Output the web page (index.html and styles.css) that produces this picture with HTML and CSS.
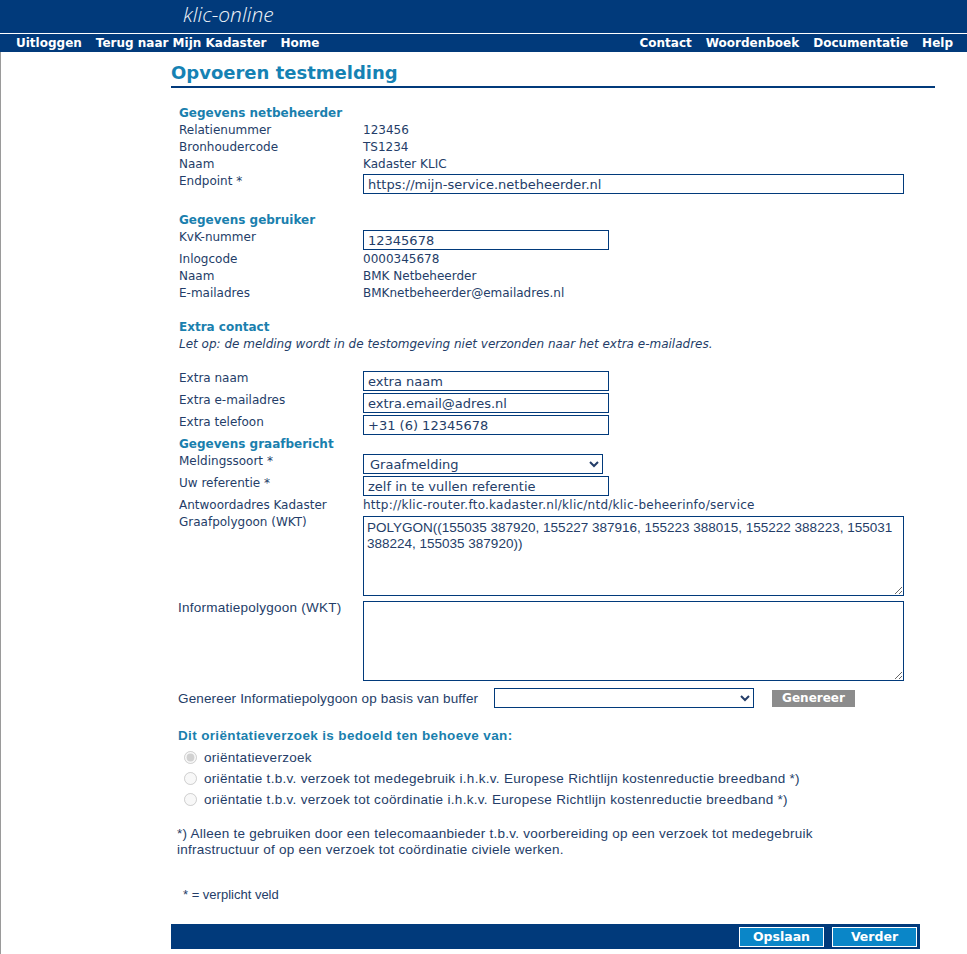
FILE: index.html
```html
<!DOCTYPE html>
<html lang="nl">
<head>
<meta charset="utf-8">
<title>Opvoeren testmelding - klic-online</title>
<link rel="stylesheet" href="styles.css">
</head>
<body>
<header class="top">
  <div class="brand">klic-online</div>
</header>
<nav class="nav">
  <div class="nav-group">
    <a href="#">Uitloggen</a>
    <a href="#">Terug naar Mijn Kadaster</a>
    <a href="#">Home</a>
  </div>
  <div class="nav-group">
    <a href="#">Contact</a>
    <a href="#">Woordenboek</a>
    <a href="#">Documentatie</a>
    <a href="#">Help</a>
  </div>
</nav>
<div class="page">
  <main class="main">
    <h1 class="title">Opvoeren testmelding</h1>
    <form class="form">
      <div class="row head">Gegevens netbeheerder</div>
      <div class="row"><span class="lbl">Relatienummer</span><span class="val">123456</span></div>
      <div class="row"><span class="lbl">Bronhoudercode</span><span class="val">TS1234</span></div>
      <div class="row"><span class="lbl">Naam</span><span class="val">Kadaster KLIC</span></div>
      <div class="row irow"><span class="lbl">Endpoint *</span><input class="inp wide" type="text" value="https://mijn-service.netbeheerder.nl"></div>
      <div class="row blank"></div>

      <div class="row head">Gegevens gebruiker</div>
      <div class="row irow"><span class="lbl">KvK-nummer</span><input class="inp" type="text" value="12345678"></div>
      <div class="row"><span class="lbl">Inlogcode</span><span class="val">0000345678</span></div>
      <div class="row"><span class="lbl">Naam</span><span class="val">BMK Netbeheerder</span></div>
      <div class="row"><span class="lbl">E-mailadres</span><span class="val">BMKnetbeheerder@emailadres.nl</span></div>
      <div class="row blank"></div>

      <div class="row head">Extra contact</div>
      <div class="row note">Let op: de melding wordt in de testomgeving niet verzonden naar het extra e-mailadres.</div>
      <div class="row blank"></div>
      <div class="row irow"><span class="lbl">Extra naam</span><input class="inp" type="text" value="extra naam"></div>
      <div class="row irow"><span class="lbl">Extra e-mailadres</span><input class="inp" type="text" value="extra.email@adres.nl"></div>
      <div class="row irow"><span class="lbl">Extra telefoon</span><input class="inp" type="text" value="+31 (6) 12345678"></div>

      <div class="row head">Gegevens graafbericht</div>
      <div class="row irow"><span class="lbl">Meldingssoort *</span>
        <select class="sel"><option>Graafmelding</option><option>Calamiteitenmelding</option><option>Oriëntatieverzoek</option></select>
      </div>
      <div class="row irow"><span class="lbl">Uw referentie *</span><input class="inp" type="text" value="zelf in te vullen referentie"></div>
      <div class="row"><span class="lbl">Antwoordadres Kadaster</span><span class="val url">http://klic-router.fto.kadaster.nl/klic/ntd/klic-beheerinfo/service</span></div>
      <div class="row trow"><span class="lbl">Graafpolygoon (WKT)</span><textarea class="ta">POLYGON((155035 387920, 155227 387916, 155223 388015, 155222 388223, 155031 388224, 155035 387920))</textarea></div>
      <div class="row trow"><span class="lbl narrow">Informatiepolygoon (WKT)</span><textarea class="ta"></textarea></div>
      <div class="gen">
        <span class="gen-lbl">Genereer Informatiepolygoon op basis van buffer</span>
        <select class="sel buf"><option></option><option>10 m</option><option>25 m</option><option>50 m</option></select>
        <button type="button" class="btn-gray">Genereer</button>
      </div>

      <div class="purpose">
        <div class="purpose-head">Dit oriëntatieverzoek is bedoeld ten behoeve van:</div>
        <label class="radio"><input type="radio" name="doel" checked disabled><span>oriëntatieverzoek</span></label>
        <label class="radio"><input type="radio" name="doel" disabled><span>oriëntatie t.b.v. verzoek tot medegebruik i.h.k.v. Europese Richtlijn kostenreductie breedband *)</span></label>
        <label class="radio"><input type="radio" name="doel" disabled><span>oriëntatie t.b.v. verzoek tot coördinatie i.h.k.v. Europese Richtlijn kostenreductie breedband *)</span></label>
      </div>

      <p class="footnote">*) Alleen te gebruiken door een telecomaanbieder t.b.v. voorbereiding op een verzoek tot medegebruik infrastructuur of op een verzoek tot coördinatie civiele werken.</p>

      <p class="required">* = verplicht veld</p>

      <div class="actions">
        <button type="button" class="btn-blue">Opslaan</button>
        <button type="button" class="btn-blue">Verder</button>
      </div>
    </form>
  </main>
</div>
</body>
</html>
```
FILE: styles.css
```css
html, body {
  margin: 0;
  padding: 0;
  background: #ffffff;
}
body {
  font-family: "DejaVu Sans", Verdana, sans-serif;
  font-size: 12px;
  color: #243d68;
}
.top {
  background: #013a7b;
  height: 33px;
  border-bottom: 1px solid #ffffff;
}
.brand {
  padding-left: 183px;
  font-family: "Open Sans", "DejaVu Sans", sans-serif;
  font-style: italic;
  font-weight: 300;
  font-size: 21px;
  line-height: 29px;
  color: #eef2f8;
}
.nav {
  background: #013a7b;
  height: 18px;
  display: flex;
  justify-content: space-between;
  align-items: center;
  padding: 0 14px 0 16px;
}
.nav-group {
  display: flex;
  gap: 14px;
}
.nav a {
  color: #ffffff;
  font-weight: bold;
  font-size: 12px;
  text-decoration: none;
  line-height: 18px;
}
.page {
  border-left: 1px solid #9a9a9a;
  padding-left: 170px;
  min-height: 903px;
}
.main {
  width: 764px;
}
.title {
  margin: 0;
  padding-top: 8px;
  font-size: 18px;
  line-height: 26px;
  color: #1582b4;
  font-weight: bold;
  border-bottom: 2px solid #013a7b;
  height: 26px;
  padding-bottom: 0;
}
.form {
  padding-top: 17px;
}
.row {
  display: flex;
  line-height: 17px;
  min-height: 17px;
}
.head {
  padding-left: 8px;
  font-weight: bold;
  color: #1a7fae;
  font-size: 12px;
}
.note {
  padding-left: 8px;
  font-style: italic;
}
.lbl {
  width: 184px;
  padding-left: 8px;
  flex: none;
}
.lbl.narrow {
  font-family: "Liberation Sans", Arial, sans-serif;
  font-size: 13.5px;
  letter-spacing: 0.25px;
  padding-left: 7px;
  width: 185px;
}
.val {
  flex: 1;
}
.val.url {
  letter-spacing: 0.25px;
}
.irow {
  height: 22px;
}
.inp, .sel {
  box-sizing: border-box;
  height: 20px;
  margin-top: 1px;
  width: 246px;
  border: 1px solid #013a7b;
  padding: 0 4px;
  font-family: "DejaVu Sans", Verdana, sans-serif;
  font-size: 13px;
  color: #243d68;
  background: #ffffff;
  border-radius: 0;
  outline: none;
}
.inp.wide {
  width: 541px;
}
.sel {
  width: 240px;
  padding: 0 2px;
}
.trow {
  min-height: 0;
}
.ta {
  box-sizing: border-box;
  width: 541px;
  height: 80px;
  margin: 2px 0 3px;
  border: 1px solid #013a7b;
  padding: 3px 3px 2px;
  font-family: "Liberation Sans", Arial, sans-serif;
  font-size: 13.5px;
  letter-spacing: 0;
  line-height: 16px;
  color: #243d68;
  resize: both;
  outline: none;
}
.gen {
  display: flex;
  align-items: center;
  margin-top: 3px;
  height: 22px;
  padding-left: 7px;
}
.gen-lbl {
  font-family: "Liberation Sans", Arial, sans-serif;
  font-size: 13.5px;
  letter-spacing: 0.15px;
  width: 316px;
  flex: none;
}
.sel.buf {
  width: 260px;
  margin-top: 0;
}
.btn-gray {
  margin-left: 18px;
  height: 17px;
  width: 83px;
  border: 0;
  background: #8c8c8c;
  color: #ffffff;
  font-family: "DejaVu Sans", Verdana, sans-serif;
  font-weight: bold;
  font-size: 12px;
  padding: 0;
  line-height: 17px;
}
.purpose {
  margin-top: 16px;
  padding-left: 7px;
  font-family: "Liberation Sans", Arial, sans-serif;
  font-size: 13.5px;
  letter-spacing: 0.3px;
}
.purpose-head {
  font-weight: bold;
  font-size: 13.5px;
  letter-spacing: 0.35px;
  color: #1a7fae;
  line-height: 22px;
}
.radio {
  display: flex;
  align-items: center;
  height: 21px;
}
.radio input {
  margin: 0 7px 0 6px;
  width: 13px;
  height: 13px;
}
.footnote {
  margin: 16px 0 0;
  padding-left: 6px;
  font-family: "Liberation Sans", Arial, sans-serif;
  font-size: 13.5px;
  letter-spacing: 0.25px;
  line-height: 16px;
  width: 660px;
}
.required {
  margin: 29px 0 0;
  padding-left: 12px;
  font-family: "Liberation Sans", Arial, sans-serif;
  font-size: 13px;
  line-height: 16px;
}
.actions {
  margin-top: 21px;
  width: 749px;
  height: 25px;
  background: #013a7b;
  display: flex;
  justify-content: flex-end;
  align-items: center;
  gap: 8px;
  padding-right: 3px;
  box-sizing: border-box;
}
.btn-blue {
  height: 20px;
  width: 85px;
  background: #0a86c8;
  border: 1px solid #ffffff;
  color: #ffffff;
  font-family: "DejaVu Sans", Verdana, sans-serif;
  font-weight: bold;
  font-size: 12.5px;
  padding: 0;
}
```
